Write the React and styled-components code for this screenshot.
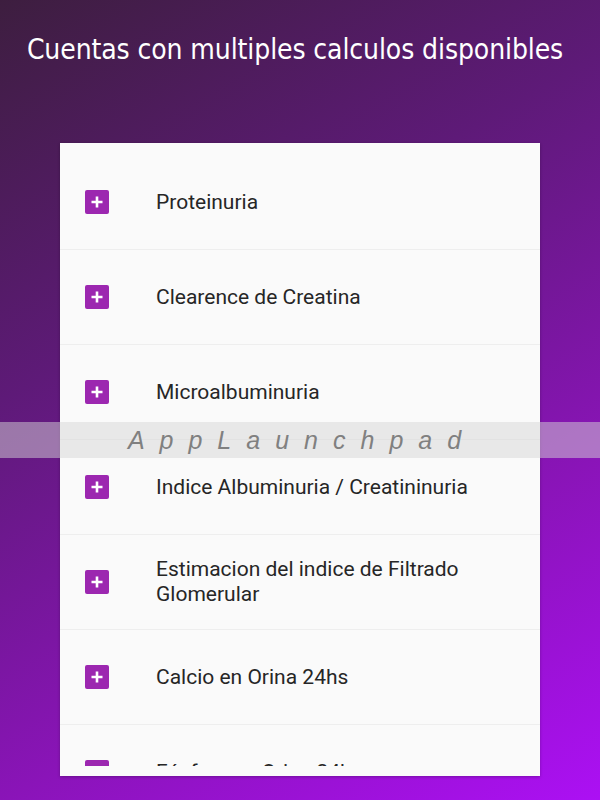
import React from "react";
import styled, { createGlobalStyle } from "styled-components";

const items = [
  "Proteinuria",
  "Clearence de Creatina",
  "Microalbuminuria",
  "Indice Albuminuria / Creatininuria",
  "Estimacion del indice de Filtrado Glomerular",
  "Calcio en Orina 24hs",
  "Fósforo en Orina 24hs",
];

const GlobalStyle = createGlobalStyle`
  html, body {
    margin: 0;
    padding: 0;
  }
  body {
    width: 600px;
    height: 800px;
    overflow: hidden;
  }
`;

const Screen = styled.div`
  position: relative;
  width: 600px;
  height: 800px;
  box-sizing: border-box;
  background: linear-gradient(150deg, #3d1e3f 0%, #5e1a78 35%, #8a14b8 70%, #ac10f4 100%);
  display: flex;
  flex-direction: column;
  align-items: center;
  overflow: hidden;
`;

const Title = styled.h1`
  margin: 31px 0 0;
  padding-right: 10px;
  font-family: "DejaVu Sans Condensed", "DejaVu Sans", sans-serif;
  font-stretch: condensed;
  font-weight: normal;
  font-size: 28px;
  line-height: 38px;
  letter-spacing: -0.1px;
  color: #ffffff;
  white-space: nowrap;
`;

const Card = styled.div`
  margin-top: 74px;
  width: 480px;
  height: 633px;
  box-sizing: border-box;
  padding: 12px 0 10px;
  background: #fafafa;
  box-shadow: 0 1px 3px rgba(0, 0, 0, 0.25);
`;

const List = styled.div`
  height: 100%;
  overflow: hidden;
`;

const Row = styled.div`
  display: flex;
  align-items: center;
  height: 95px;
  box-sizing: border-box;
  border-bottom: 1px solid #eeeeee;
  padding-left: 25px;
`;

const Plus = styled.span`
  flex: none;
  width: 24px;
  height: 24px;
  border-radius: 2px;
  background: #9c27b0;
  display: flex;
  align-items: center;
  justify-content: center;
`;

const Label = styled.span`
  margin-left: 47px;
  padding-right: 36px;
  font-family: Roboto, "Noto Sans", sans-serif;
  font-size: 21px;
  line-height: 25px;
  color: #262626;
`;

const Watermark = styled.div`
  position: absolute;
  left: 0;
  right: 0;
  top: 422px;
  height: 36px;
  background: rgba(214, 214, 214, 0.5);
  display: flex;
  align-items: center;
  justify-content: center;
  font-family: "Liberation Sans", Arial, sans-serif;
  font-style: italic;
  font-size: 25px;
  letter-spacing: 15px;
  color: #808080;
  padding-left: 4px;
`;

const PlusIcon = () => (
  <svg width="14" height="14" viewBox="0 0 14 14">
    <path d="M7 1.5v11M1.5 7h11" stroke="#fff" strokeWidth="2.6" />
  </svg>
);

export default function App() {
  return (
    <Screen>
      <GlobalStyle />
      <Title>Cuentas con multiples calculos disponibles</Title>
      <Card>
        <List>
          {items.map((item) => (
            <Row key={item}>
              <Plus>
                <PlusIcon />
              </Plus>
              <Label>{item}</Label>
            </Row>
          ))}
        </List>
      </Card>
      <Watermark>AppLaunchpad</Watermark>
    </Screen>
  );
}
